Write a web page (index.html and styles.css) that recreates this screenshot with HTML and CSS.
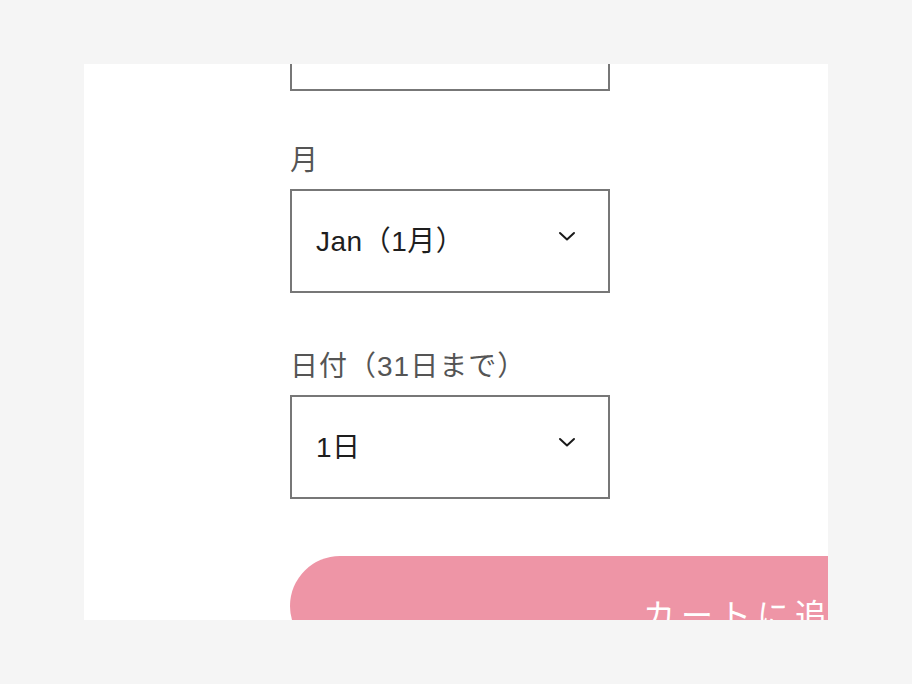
FILE: index.html
```html
<!DOCTYPE html>
<html lang="ja">
<head>
<meta charset="UTF-8" />
<meta name="viewport" content="width=device-width, initial-scale=1" />
<title>カートに追加</title>
<link rel="stylesheet" href="styles.css">
</head>
<body>

<div class="panel">
  <form class="order-form">
    <div class="field first">
      <input type="text" class="text-input" />
    </div>

    <div class="field">
      <label for="month">月</label>
      <div class="select-wrap">
        <select id="month">
          <option>Jan（1月）</option>
          <option>Feb（2月）</option>
          <option>Mar（3月）</option>
        </select>
        <svg class="chevron" width="18" height="10" viewBox="0 0 18 10">
          <polyline points="2,2 9,8.5 16,2" fill="none" stroke="#1a1a1a" stroke-width="2" stroke-linecap="round" stroke-linejoin="round"/>
        </svg>
      </div>
    </div>

    <div class="field">
      <label for="day">日付（31日まで）</label>
      <div class="select-wrap">
        <select id="day">
          <option>1日</option>
          <option>2日</option>
          <option>3日</option>
        </select>
        <svg class="chevron" width="18" height="10" viewBox="0 0 18 10">
          <polyline points="2,2 9,8.5 16,2" fill="none" stroke="#1a1a1a" stroke-width="2" stroke-linecap="round" stroke-linejoin="round"/>
        </svg>
      </div>
    </div>

    <button type="button" class="add-cart">カートに追加</button>
  </form>
</div>

</body>
</html>
```

FILE: styles.css
```css
body {
  margin: 0;
  background: #f5f5f5;
  font-family: "Liberation Sans", "Noto Sans CJK JP", sans-serif;
}
/* visible window onto the scrolled form */
.panel {
  width: 744px;
  height: 556px;
  margin: 64px 0 0 84px;
  background: #fff;
  overflow: hidden;
}
.order-form {
  margin-top: -77px;
  padding-left: 206px;
}
.field {
  margin-top: 54px;
  width: 320px;
}
.field.first {
  margin-top: 0;
}
.field.first + .field {
  margin-top: 50px;
}
label {
  display: block;
  font-size: 28px;
  line-height: 40px;
  letter-spacing: 1px;
  color: #555;
  margin-bottom: 8px;
}
.text-input,
select {
  display: block;
  width: 320px;
  height: 104px;
  box-sizing: border-box;
  border: 2px solid #777;
  border-radius: 0;
  background: #fff;
  margin: 0;
  font-family: inherit;
}
select {
  appearance: none;
  -webkit-appearance: none;
  padding: 0 60px 0 24px;
  font-size: 28px;
  letter-spacing: 0.5px;
  color: #1e1e1e;
  outline: none;
}
.select-wrap {
  position: relative;
}
.chevron {
  position: absolute;
  right: 34px;
  top: 42px;
  pointer-events: none;
}
.add-cart {
  display: block;
  margin-top: 57px;
  width: 934px;
  height: 100px;
  border: none;
  border-radius: 50px;
  background: #ee95a6;
  color: #fff;
  font-family: inherit;
  font-size: 32px;
  letter-spacing: 6px;
  padding: 14px 0 0;
  cursor: pointer;
}
```
